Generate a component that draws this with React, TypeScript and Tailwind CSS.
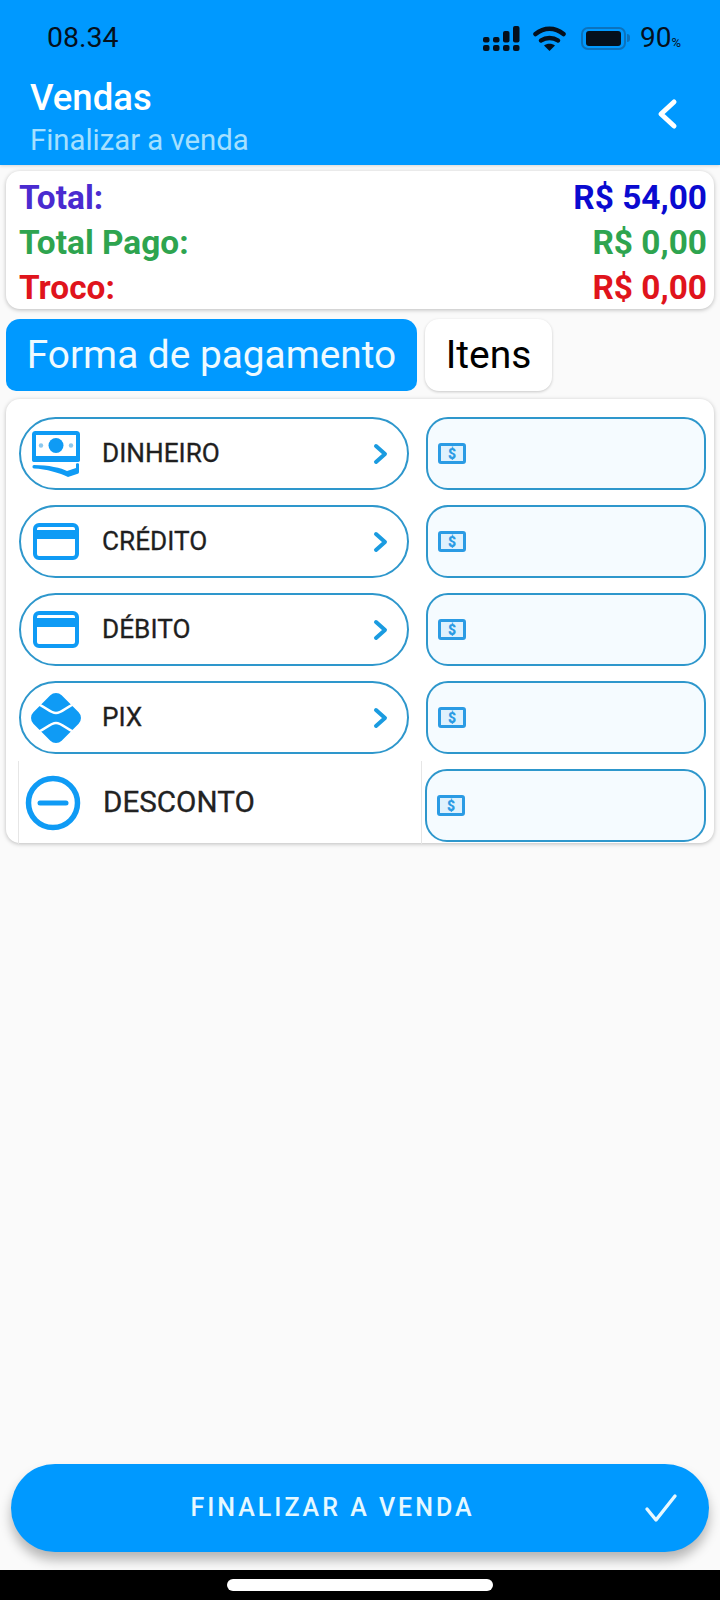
import React from "react";

const Chevron = () => (
  <svg width="18" height="24" viewBox="0 0 18 24" fill="none" className="shrink-0">
    <path d="M4 4l9 8-9 8" stroke="#1a9be0" strokeWidth="4" strokeLinecap="round" strokeLinejoin="round" />
  </svg>
);

const Cash = () => (
  <svg width="48" height="46" viewBox="0 0 48 46" fill="#0f9bf5">
    <rect x="2" y="2" width="44" height="27" rx="1.500" fill="none" stroke="#0f9bf5" strokeWidth="4" />
    <rect x="0" y="25" width="48" height="6" rx="2" />
    <circle cx="24" cy="14.500" r="7.500" />
    <circle cx="9" cy="14.500" r="2.200" fill="#8cc8ee" />
    <circle cx="39" cy="14.500" r="2.200" fill="#8cc8ee" />
    <path d="M2 34c14 0 28 3 33 6l9-3v-4c0-1 3-1 3 0v8c0 1-1 2-2 2l-9 3C28 42 14 38 2 37.500c-2 0-2-3.500 0-3.500z" />
  </svg>
);

const Card = () => (
  <svg width="46" height="37" viewBox="0 0 46 37">
    <rect x="2" y="2" width="42" height="33" rx="4" fill="none" stroke="#0f9bf5" strokeWidth="4" />
    <rect x="2" y="7" width="42" height="9" fill="#0f9bf5" />
  </svg>
);

const Pix = () => (
  <svg width="52" height="52" viewBox="0 0 52 52" fill="none">
    <rect x="6" y="6" width="40" height="40" rx="8" fill="#0f9bf5" transform="rotate(45 26 26)" />
    <path d="M6 12C13 12 19 21 26 21S39 12 46 12" stroke="#fff" strokeWidth="2.600" />
    <path d="M6 40C13 40 19 31 26 31S39 40 46 40" stroke="#fff" strokeWidth="2.600" />
  </svg>
);

const MinusCircle = () => (
  <svg width="56" height="56" viewBox="0 0 56 56" fill="none">
    <circle cx="28" cy="28" r="24.500" stroke="#0f9bf5" strokeWidth="5.500" />
    <path d="M15 28h26" stroke="#0f9bf5" strokeWidth="5" strokeLinecap="round" />
  </svg>
);

const Money = () => (
  <svg width="28" height="21" viewBox="0 0 28 21" className="shrink-0">
    <rect x="1.500" y="1.500" width="25" height="18" rx="1.500" fill="#dff1fd" stroke="#2b9be4" strokeWidth="3" />
    <text x="14" y="16" textAnchor="middle" fontFamily="Roboto, sans-serif" fontWeight="900" fontSize="14" fill="#2b9be4">$</text>
  </svg>
);

const Signal = () => (
  <svg width="37" height="25" viewBox="0 0 37 25" fill="#05101c">
    <rect x="0" y="11" width="6.500" height="5.500" rx="2" /><rect x="0" y="19" width="6.500" height="6" rx="2" />
    <rect x="10" y="11" width="6.500" height="5.500" rx="2" /><rect x="10" y="19" width="6.500" height="6" rx="2" />
    <rect x="20" y="5" width="6.500" height="11.500" rx="2" /><rect x="20" y="19" width="6.500" height="6" rx="2" />
    <rect x="30" y="0" width="6.500" height="16.500" rx="2" /><rect x="30" y="19" width="6.500" height="6" rx="2" />
  </svg>
);

const Wifi = () => (
  <svg width="33" height="25" viewBox="0 0 33 25" fill="none" stroke="#05101c" strokeWidth="4.500" strokeLinecap="round">
    <path d="M2.500 8c8.500-7 19.500-7 28 0" />
    <path d="M8 14.500c5-3.500 12-3.500 17 0" />
    <path d="M16.500 25l-5.500-5.500c3-2.500 8-2.500 11 0z" fill="#05101c" stroke="none" />
  </svg>
);

const Battery = () => (
  <div className="flex items-center">
    <div className="flex h-[23px] w-[45px] items-center justify-center rounded-[7px] border-2 border-[#0b72bd]">
      <div className="h-[15px] w-[35px] rounded-[3px] bg-[#05101c]" />
    </div>
    <div className="ml-[1px] h-[8px] w-[3px] rounded-r-sm bg-[#0b72bd]" />
  </div>
);

const rows = [
  { icon: <Cash />, label: "DINHEIRO" },
  { icon: <Card />, label: "CRÉDITO" },
  { icon: <Card />, label: "DÉBITO" },
  { icon: <Pix />, label: "PIX" },
];

function MoneyInput({ className = "" }: { className?: string }) {
  return (
    <div className={`flex h-[73px] shrink-0 items-center rounded-[22px] border-2 border-[#2e97cc] bg-[#f5fbff] pl-[10px] ${className}`}>
      <Money />
    </div>
  );
}

export default function App() {
  return (
    <div className="flex h-[1600px] w-[720px] flex-col overflow-hidden bg-[#fafafa] font-['Roboto',sans-serif]">
      <header className="relative h-[165px] shrink-0 bg-[#0099ff] shadow-[0_1px_3px_rgba(0,0,0,0.15)]">
        <div className="flex h-[74px] items-center justify-between pl-[47px] pr-[39px] pt-[2px]">
          <span className="text-[28.5px] leading-none text-[#05101c]">08.34</span>
          <div className="flex items-center">
            <Signal />
            <div className="ml-[13px]"><Wifi /></div>
            <div className="ml-[15px]"><Battery /></div>
            <span className="ml-[10px] text-[28px] leading-none text-[#05101c]">
              90<span className="text-[13px]">%</span>
            </span>
          </div>
        </div>
        <div className="flex items-center justify-between pl-[30px] pr-[40px] pt-[4px]">
          <div className="flex flex-col">
            <span className="text-[36.5px] font-medium leading-[40px] text-white">Vendas</span>
            <span className="mt-[6px] text-[29.3px] leading-[32px] text-[#a5e0ff]">Finalizar a venda</span>
          </div>
          <svg className="mb-[7px]" width="26" height="32" viewBox="0 0 26 32" fill="none">
            <path d="M20 4L7 16l13 12" stroke="#fff" strokeWidth="5" strokeLinecap="round" strokeLinejoin="round" />
          </svg>
        </div>
      </header>

      <section className="mx-[6px] mt-[6px] flex h-[138px] flex-col justify-center rounded-[14px] bg-white pl-[13px] pr-[7px] pt-[4px] text-[33.4px] font-bold leading-[45px] shadow-[0_1px_4px_rgba(0,0,0,0.25)]">
        <div className="flex justify-between text-[#4a2bd0]">
          <span>Total:</span>
          <span className="text-[#0a0ad0]">R$ 54,00</span>
        </div>
        <div className="flex justify-between text-[#2ea44f]">
          <span>Total Pago:</span>
          <span>R$ 0,00</span>
        </div>
        <div className="flex justify-between text-[#e0141c]">
          <span>Troco:</span>
          <span>R$ 0,00</span>
        </div>
      </section>

      <nav className="ml-[6px] mt-[10px] flex h-[72px] gap-[8px]">
        <div className="flex w-[411px] items-center justify-center rounded-t-[14px] rounded-b-[10px] bg-[#0099ff] text-[38.8px] text-[#eefaff]">
          Forma de pagamento
        </div>
        <div className="flex w-[127px] items-center justify-center rounded-[14px] bg-white text-[39px] text-black shadow-[0_1px_3px_rgba(0,0,0,0.2)]">
          Itens
        </div>
      </nav>

      <main className="mx-[6px] mt-[8px] flex h-[444px] flex-col rounded-[14px] bg-white px-[13px] pt-[18px] shadow-[0_1px_4px_rgba(0,0,0,0.25)]">
        <div className="flex flex-col gap-[15px]">
          {rows.map((r) => (
            <div key={r.label} className="flex h-[73px] items-center justify-between">
              <div className="flex h-[73px] w-[390px] items-center rounded-full border-2 border-[#2e97cc] pl-[9px] pr-[17px]">
                <div className="flex w-[52px] justify-center">{r.icon}</div>
                <span className="ml-[20px] flex-1 text-[26.2px] font-normal leading-none text-[#1f1f1f] [-webkit-text-stroke:0.3px_#1f1f1f]">{r.label}</span>
                <Chevron />
              </div>
              <MoneyInput className="mr-[-6px] w-[280px] translate-x-[-1px]" />
            </div>
          ))}
        </div>
        <div className="mt-[7px] flex h-[83px] items-start">
          <div className="ml-[-1px] flex h-[83px] w-[404px] shrink-0 items-center border-x border-[#e6e6e6] pl-[6px]">
            <MinusCircle />
            <span className="ml-[22px] text-[29.6px] font-normal leading-none text-[#222] [-webkit-text-stroke:0.3px_#222]">DESCONTO</span>
          </div>
          <MoneyInput className="ml-[3px] mt-[8px] w-[281px]" />
        </div>
      </main>

      <div className="flex-1" />

      <button className="relative mx-[11px] mb-[18px] flex h-[88px] items-center justify-center rounded-full bg-[#0099ff] pr-[55px] shadow-[0_8px_12px_rgba(0,0,0,0.28)]">
        <span className="text-[25px] font-medium tracking-[3px] text-[#e6f8ff]">FINALIZAR A VENDA</span>
        <svg className="absolute right-[31px] top-[29px]" width="34" height="30" viewBox="0 0 34 30" fill="none">
          <path d="M3 16l9 11L31 3" stroke="#e6f8ff" strokeWidth="3.400" strokeLinecap="round" strokeLinejoin="round" />
        </svg>
      </button>

      <div className="flex h-[30px] shrink-0 items-center justify-center bg-black">
        <div className="h-[12px] w-[266px] rounded-full bg-white" />
      </div>
    </div>
  );
}
